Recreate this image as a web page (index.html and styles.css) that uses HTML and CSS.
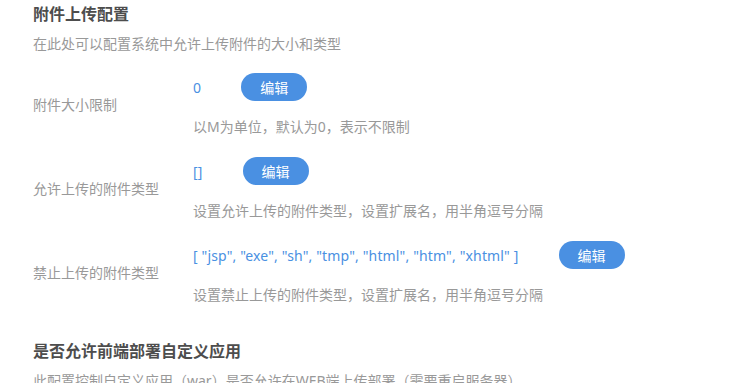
FILE: index.html
```html
<!DOCTYPE html>
<html lang="zh-CN">
<head>
  <meta charset="UTF-8">
  <meta name="viewport" content="width=device-width, initial-scale=1.0">
  <title>附件上传配置</title>
  <link rel="stylesheet" href="styles.css">
</head>
<body>
  <div class="section">
    <h2 class="sectionTitle">附件上传配置</h2>
    <p class="sectionDesc">在此处可以配置系统中允许上传附件的大小和类型</p>

    <div class="configRow">
      <div class="configLabel">附件大小限制</div>
      <div class="configBody">
        <div class="configLine">
          <span class="configValue">0</span>
          <button class="editBtn">编辑</button>
        </div>
        <p class="configHelp">以M为单位，默认为0，表示不限制</p>
      </div>
    </div>

    <div class="configRow">
      <div class="configLabel">允许上传的附件类型</div>
      <div class="configBody">
        <div class="configLine">
          <span class="configValue">[]</span>
          <button class="editBtn">编辑</button>
        </div>
        <p class="configHelp">设置允许上传的附件类型，设置扩展名，用半角逗号分隔</p>
      </div>
    </div>

    <div class="configRow">
      <div class="configLabel">禁止上传的附件类型</div>
      <div class="configBody">
        <div class="configLine">
          <span class="configValue">[ "jsp", "exe", "sh", "tmp", "html", "htm", "xhtml" ]</span>
          <button class="editBtn">编辑</button>
        </div>
        <p class="configHelp">设置禁止上传的附件类型，设置扩展名，用半角逗号分隔</p>
      </div>
    </div>
  </div>

  <div class="section">
    <h2 class="sectionTitle">是否允许前端部署自定义应用</h2>
    <p class="sectionDesc">此配置控制自定义应用（war）是否允许在WEB端上传部署（需要重启服务器）</p>
  </div>
</body>
</html>
```

FILE: styles.css
```css
/* General Reset and Typography */
* {
  box-sizing: border-box;
  margin: 0;
  padding: 0;
  font-family: "Noto Sans", "Noto Sans CJK SC", sans-serif;
}

body {
  background-color: #fff;
  padding: 2px 0 0 33px;
}

/* Section */
.section {
  margin-bottom: 34px;
}

.sectionTitle {
  font-size: 16px;
  line-height: 24px;
  font-weight: bold;
  color: #4d4d4d;
}

.sectionDesc {
  margin-top: 8px;
  font-size: 14px;
  line-height: 20px;
  color: #999;
}

/* Config Rows */
.configRow {
  display: flex;
  align-items: center;
  margin-top: 19px;
}

.configRow + .configRow {
  margin-top: 20px;
}

.configLabel {
  width: 160px;
  font-size: 14px;
  line-height: 20px;
  color: #999;
}

.configLine {
  display: flex;
  align-items: center;
  height: 28px;
}

.configValue {
  font-size: 14px;
  letter-spacing: 0.15px;
  color: #4a90e2;
  margin-right: 40px;
}

.configHelp {
  margin-top: 16px;
  font-size: 14px;
  line-height: 20px;
  color: #999;
}

/* Button Styling */
.editBtn {
  width: 66px;
  height: 28px;
  border: none;
  border-radius: 14px;
  background-color: #4a90e2;
  color: #fff;
  font-size: 14px;
  cursor: pointer;
}
```
